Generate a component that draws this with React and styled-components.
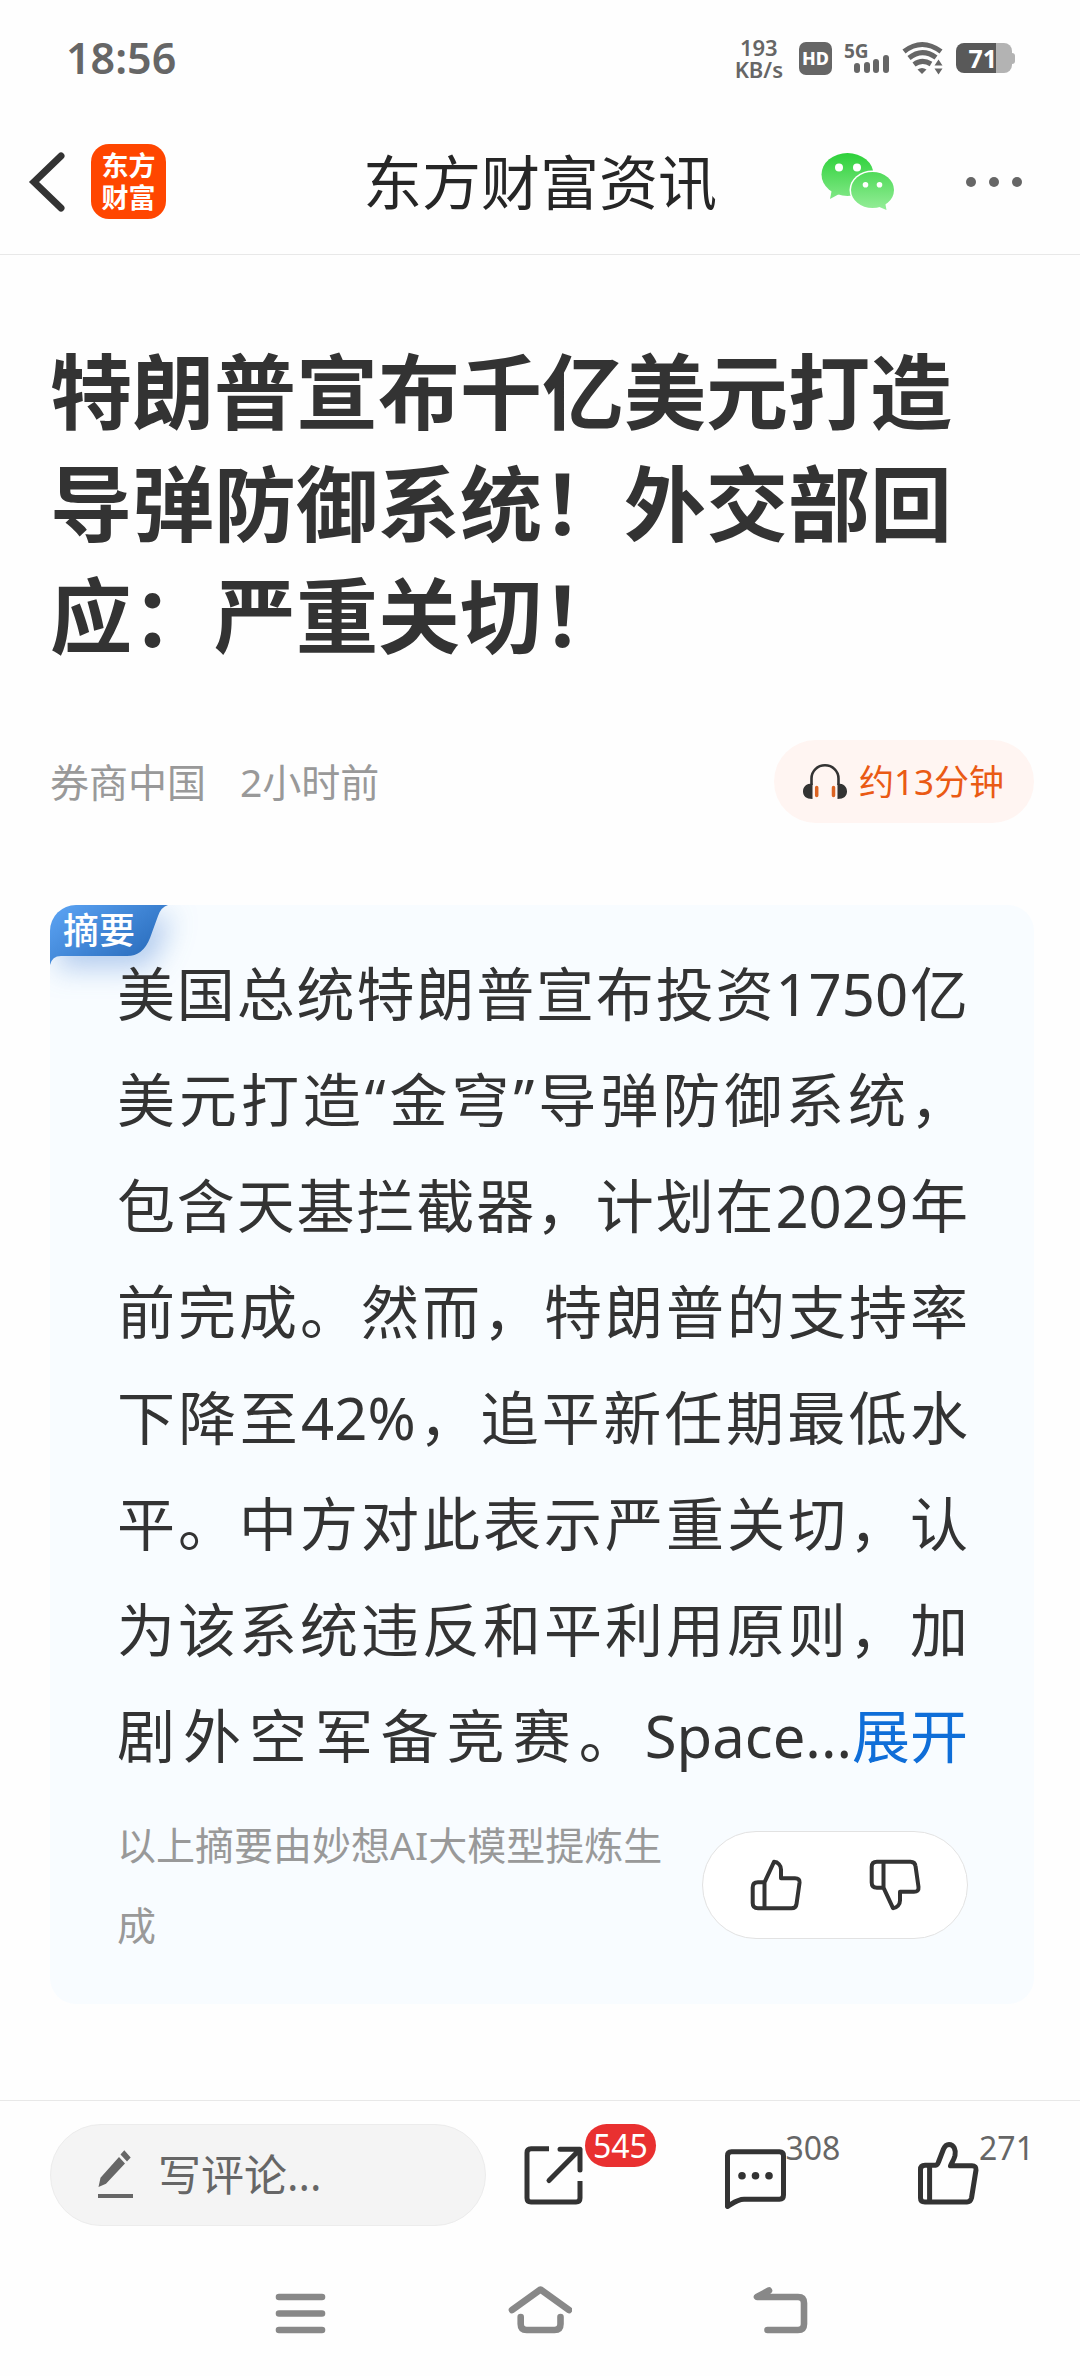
import React from "react";
import styled, { createGlobalStyle } from "styled-components";

const GlobalStyle = createGlobalStyle`
  *, *::before, *::after { box-sizing: border-box; }
  body {
    margin: 0;
    background: #fefefe;
    color: #333;
    font-family: "Noto Sans", "Noto Sans CJK SC", sans-serif;
  }
  button {
    margin: 0;
    padding: 0;
    border: 0;
    background: none;
    color: inherit;
    font: inherit;
    cursor: pointer;
  }
  svg { display: block; flex: none; }
`;

const Page = styled.div`
  display: flex;
  flex-direction: column;
  min-height: 100vh;
`;

/* Status bar */
const StatusBar = styled.div`
  display: flex;
  align-items: center;
  justify-content: space-between;
  height: 109px;
  padding: 7px 65px 0 66px;
  color: #666;
`;

const Clock = styled.time`
  font-size: 43px;
  line-height: 48px;
  font-weight: 600;
`;

const StatusIcons = styled.div`
  display: flex;
  align-items: center;
  gap: 12px;
`;

const NetSpeed = styled.div`
  display: flex;
  flex-direction: column;
  align-items: center;
  margin-right: 4px;
  font-size: 22px;
  line-height: 22px;
  font-weight: 600;
`;

const HdBadge = styled.span`
  display: grid;
  place-items: center;
  width: 33px;
  height: 33px;
  border-radius: 7px;
  background: #666;
  color: #fff;
  font-size: 18px;
  line-height: 20px;
  font-weight: 800;
`;

const Signal = styled.div`
  display: flex;
  flex-direction: column;
  width: 46px;
  height: 34px;
  font-size: 19px;
  line-height: 20px;
  font-weight: 700;
`;

const SignalBars = styled.svg`
  align-self: flex-end;
  margin-top: -6px;
`;

const Battery = styled.div`
  display: flex;
  align-items: center;
`;

const BatteryBody = styled.div`
  display: flex;
  justify-content: flex-end;
  width: 56px;
  height: 30px;
  padding-right: 15px;
  border-radius: 8px;
  background: linear-gradient(90deg, #595959 71%, #b3b3b3 71%);
  color: #fff;
  font-size: 25px;
  line-height: 30px;
  font-weight: 700;
`;

const BatteryTip = styled.span`
  width: 3px;
  height: 11px;
  border-radius: 0 3px 3px 0;
  background: #b3b3b3;
`;

/* App header */
const Header = styled.header`
  display: grid;
  grid-template-columns: 1fr auto 1fr;
  align-items: center;
  height: 146px;
  border-bottom: 1px solid #e8e8e8;
`;

const HeaderLeft = styled.div`
  display: flex;
  align-items: center;
  gap: 23px;
  padding-left: 28px;
`;

const HeaderRight = styled.div`
  display: flex;
  align-items: center;
  justify-content: flex-end;
  gap: 70px;
  padding-right: 57px;
`;

const AppLogo = styled.a`
  display: flex;
  flex-direction: column;
  align-items: center;
  justify-content: center;
  width: 75px;
  height: 75px;
  border-radius: 18px;
  background: #ff4600;
  color: #fff;
  font-size: 27px;
  line-height: 32px;
  font-weight: 700;
  text-decoration: none;
`;

const HeaderTitle = styled.h2`
  margin: 0;
  color: #262626;
  font-size: 59px;
  line-height: 84px;
  font-weight: 400;
`;

/* Article */
const Article = styled.article`
  flex: 1;
  padding: 80px 46px 96px 50px;
`;

const Headline = styled.h1`
  margin: 0;
  padding-right: 40px;
  font-size: 82px;
  line-height: 112px;
  font-weight: 700;
`;

const MetaRow = styled.div`
  display: flex;
  align-items: center;
  justify-content: space-between;
  margin-top: 69px;
`;

const Meta = styled.div`
  display: flex;
  gap: 34px;
  color: #999;
  font-size: 39px;
  line-height: 56px;
`;

const ListenButton = styled.button`
  display: flex;
  align-items: center;
  gap: 11px;
  height: 83px;
  padding: 0 30px 0 28px;
  border-radius: 42px;
  background: #fff5f2;
  color: #ea5a14;
  font-size: 35px;
  line-height: 52px;
`;

const SummaryCard = styled.section`
  position: relative;
  margin-top: 82px;
  padding: 36px 66px 39px 67px;
  border-radius: 26px;
  background: #f8fcff;
  overflow: hidden;
`;

const Tag = styled.div`
  position: absolute;
  top: 0;
  left: 0;
`;

const TagShape = styled.svg`
  filter: drop-shadow(9px 12px 14px rgba(50, 115, 205, 0.35));
  overflow: visible;
`;

const TagText = styled.span`
  position: absolute;
  top: 0;
  left: 13px;
  color: #fff;
  font-size: 36px;
  line-height: 52px;
  font-weight: 500;
`;

const SummaryText = styled.p`
  position: relative;
  margin: 0;
  font-size: 58px;
  line-height: 106px;
  text-align: justify;
  text-align-last: justify;
`;

const ExpandButton = styled.button`
  display: inline-block;
  color: #0f6ed8;
  text-align-last: auto;
`;

const CardFooter = styled.div`
  display: flex;
  align-items: center;
  gap: 16px;
  margin-top: 16px;
`;

const Disclaimer = styled.p`
  flex: 1;
  margin: 0;
  color: #999;
  font-size: 39px;
  line-height: 80px;
`;

const VotePill = styled.div`
  display: flex;
  align-items: center;
  justify-content: center;
  gap: 67px;
  width: 266px;
  height: 108px;
  border: 1px solid #e2e2e2;
  border-radius: 54px;
  background: #fff;
`;

/* Comment bar */
const CommentBar = styled.footer`
  display: flex;
  gap: 37px;
  padding: 23px 46px 0 50px;
  border-top: 1px solid #e8e8e8;
`;

const CommentBox = styled.label`
  display: flex;
  align-items: center;
  gap: 23px;
  flex: 0 1 436px;
  min-width: 0;
  height: 102px;
  padding: 0 46px;
  border: 1px solid #ececec;
  border-radius: 51px;
  background: #f4f4f4;
`;

const CommentInput = styled.input`
  flex: 1;
  min-width: 0;
  padding: 0;
  border: 0;
  outline: 0;
  background: none;
  color: #333;
  font: inherit;
  font-size: 43px;
  line-height: 60px;
  &::placeholder { color: #666; opacity: 1; }
`;

const Actions = styled.div`
  display: grid;
  grid-template-columns: 201fr 194fr 116fr;
  flex: 1;
`;

const ActionButton = styled.button`
  display: flex;
  align-items: flex-start;
  justify-self: start;
  svg { margin-top: 18px; }
`;

const Count = styled.span`
  color: ${(p) => (p.$alert ? "#fff" : "#666")};
  background: ${(p) => (p.$alert ? "#e93030" : "none")};
  padding: ${(p) => (p.$alert ? "0 8px" : "0")};
  border-radius: 22px;
  font-size: 32px;
  line-height: ${(p) => (p.$alert ? "43px" : "47px")};
`;

/* System navigation */
const SystemNav = styled.nav`
  display: grid;
  grid-template-columns: repeat(3, 1fr);
  justify-items: center;
  align-items: center;
  width: 100%;
  max-width: 720px;
  margin: 0 auto;
  padding: 56px 0 34px;
`;

const line = {
  fill: "none",
  strokeLinecap: "round",
  strokeLinejoin: "round",
};

const WifiIcon = () => (
  <svg width="42" height="34" viewBox="0 0 42 34" fill="none" stroke="#666" strokeWidth="5">
    <path d="M2 10.5Q20 -3.500 39 10.500" />
    <path d="M7 17Q20 6.500 34 16.500" />
    <path d="M12 23.500Q20 17.500 29 23" />
    <path d="M15.500 28.500Q20 25.500 24.500 28.500L20 33Z" fill="#666" stroke="none" />
    <path d="M36.500 18.500L40.500 24.500H32.500ZM36.500 33.500L40.500 27.500H32.500Z" fill="#666" stroke="none" />
  </svg>
);

const BackIcon = () => (
  <svg width="40" height="64" viewBox="0 0 40 64" {...line} strokeLinejoin="miter" stroke="#333" strokeWidth="7">
    <path d="M33 6L6 32L33 58" />
  </svg>
);

const WeChatIcon = () => (
  <svg width="74" height="60" viewBox="0 0 74 60">
    <defs>
      <linearGradient id="wechat" x1="0" y1="0" x2="0" y2="58" gradientUnits="userSpaceOnUse">
        <stop offset="0" stopColor="#2bd038" />
        <stop offset="1" stopColor="#95ed98" />
      </linearGradient>
    </defs>
    <ellipse cx="26.500" cy="22.500" rx="26" ry="21.500" fill="url(#wechat)" />
    <path d="M11 37L9 47L20 41Z" fill="url(#wechat)" />
    <ellipse cx="51.500" cy="38" rx="23" ry="19.500" fill="#fff" />
    <ellipse cx="51.500" cy="38" rx="21.500" ry="18" fill="url(#wechat)" />
    <path d="M56 54L65.500 58L64 50Z" fill="url(#wechat)" />
    <g fill="#fff">
      <circle cx="18" cy="15.500" r="4" />
      <circle cx="36" cy="15.500" r="4" />
      <circle cx="44.500" cy="32.700" r="2.800" />
      <circle cx="58.500" cy="32.700" r="2.800" />
    </g>
  </svg>
);

const MoreIcon = () => (
  <svg width="58" height="12" viewBox="0 0 58 12" fill="#666">
    <circle cx="6" cy="6" r="5" />
    <circle cx="29" cy="6" r="5" />
    <circle cx="52" cy="6" r="5" />
  </svg>
);

const HeadphoneIcon = () => (
  <svg width="46" height="38" viewBox="0 0 46 38">
    <path d="M9.500 22V15.500C9.500 8 15.500 2.300 23 2.300S36.500 8 36.500 15.500V22" fill="none" stroke="#333" strokeWidth="2.600" />
    <path d="M10.500 20.500C4 20.500 1 24 1 28.500S4 36 10.500 36ZM35.500 20.500C42 20.500 45 24 45 28.500S42 36 35.500 36Z" fill="#333" />
    <path d="M14.700 24.500V32.500M31.500 24.500V32.500" stroke="#dc6423" strokeWidth="3.500" strokeLinecap="round" />
  </svg>
);

const TagBackground = () => (
  <TagShape width="118" height="60" viewBox="0 0 118 60">
    <defs>
      <linearGradient id="tag" x1="0" y1="0" x2="1" y2="0.700">
        <stop offset="0" stopColor="#5da5f5" />
        <stop offset="1" stopColor="#286bbb" />
      </linearGradient>
    </defs>
    <path d="M0 0H118Q111 2 108 11L100 33Q93 51 77 51H11Q2 51 0 60Z" fill="url(#tag)" />
  </TagShape>
);

const VoteIcon = ({ down }) => (
  <svg width="52" height="52" viewBox="0 0 52 52" {...line} stroke="#333" strokeWidth="4">
    <g transform={down ? "matrix(1 0 0 -1 0 52)" : undefined}>
      <path d="M14.500 23.300L24 2.800C28 3 31 6.500 31 10.500V19.300H45Q50 19.300 49.500 24L46.500 45Q46 49.300 41.500 49.300H8Q2.700 49.300 2.700 44V28.500Q2.700 23.300 8 23.300ZM14.500 23.300V49.300" />
    </g>
  </svg>
);

const PencilIcon = () => (
  <svg width="38" height="52" viewBox="0 0 38 52" fill="#666">
    <path d="M1.500 38L3.500 28.700L22 8L28 14.500L9 34.700ZM23.500 5.500L27.300 1.300L33.700 8.500L30 12.500Z" />
    <path d="M1 45H36V49H1Z" />
  </svg>
);

const ShareIcon = () => (
  <svg width="62" height="66" viewBox="0 0 62 66" {...line} stroke="#333" strokeWidth="5">
    <path strokeLinecap="butt" d="M26 6.700H8Q4 6.700 4 10.700V56Q4 60 8 60H53Q57 60 57 56V39" />
    <path d="M37 7.300H57V28M57 7.300L26 38.500" />
  </svg>
);

const ChatIcon = () => (
  <svg width="62" height="68" viewBox="0 0 62 68" {...line} stroke="#333" strokeWidth="5">
    <path d="M3.500 64.500V13.700Q3.500 9.700 7.500 9.700H55.500Q59.500 9.700 59.500 13.700V53Q59.500 57.300 55.500 57.300H20C13 57.300 8 62 3.500 64.500Z" />
    <g fill="#333" stroke="none">
      <circle cx="18" cy="33.700" r="3.800" />
      <circle cx="31.500" cy="33.700" r="3.800" />
      <circle cx="45" cy="33.700" r="3.800" />
    </g>
  </svg>
);

const LikeIcon = () => (
  <svg width="62" height="66" viewBox="0 0 62 66" {...line} stroke="#333" strokeWidth="5">
    <path d="M12.600 23.300H18.500Q20.500 23 21.500 20L26.500 7C28 3.500 30 2.500 32 2.500C37 2.500 39 8 38 13.500C37 18 35 20 33.500 23.800H55Q59.500 23.800 59 28L54.500 56Q53.500 60 50 60H8Q3.500 60 3.500 56V27.500Q3.500 23.300 8 23.300ZM12.600 23.300V60" />
  </svg>
);

const NavIcon = ({ d }) => (
  <svg width="64" height="60" viewBox="0 0 64 60" {...line} stroke="#888" strokeWidth="6.600">
    <path d={d} />
  </svg>
);

export default function App() {
  return (
    <Page lang="zh-CN">
      <GlobalStyle />
      <StatusBar>
        <Clock>18:56</Clock>
        <StatusIcons>
          <NetSpeed>
            <span>193</span>
            <span>KB/s</span>
          </NetSpeed>
          <HdBadge>HD</HdBadge>
          <Signal>
            <span>5G</span>
            <SignalBars width="36" height="18" viewBox="0 0 36 18" fill="#666">
              <rect x="0" y="8" width="6" height="10" rx="3" />
              <rect x="10" y="7" width="6" height="11" rx="3" />
              <rect x="19" y="4" width="6" height="14" rx="3" />
              <rect x="29" y="0" width="6" height="18" rx="3" />
            </SignalBars>
          </Signal>
          <WifiIcon />
          <Battery>
            <BatteryBody>71</BatteryBody>
            <BatteryTip />
          </Battery>
        </StatusIcons>
      </StatusBar>

      <Header>
        <HeaderLeft>
          <button type="button" aria-label="返回"><BackIcon /></button>
          <AppLogo href="#home">
            <span>东方</span>
            <span>财富</span>
          </AppLogo>
        </HeaderLeft>
        <HeaderTitle>东方财富资讯</HeaderTitle>
        <HeaderRight>
          <button type="button" aria-label="微信分享"><WeChatIcon /></button>
          <button type="button" aria-label="更多"><MoreIcon /></button>
        </HeaderRight>
      </Header>

      <Article>
        <Headline>特朗普宣布千亿美元打造导弹防御系统！外交部回应：严重关切！</Headline>
        <MetaRow>
          <Meta>
            <span>券商中国</span>
            <span>2小时前</span>
          </Meta>
          <ListenButton type="button">
            <HeadphoneIcon />
            约13分钟
          </ListenButton>
        </MetaRow>

        <SummaryCard>
          <Tag>
            <TagBackground />
            <TagText>摘要</TagText>
          </Tag>
          <SummaryText>
            美国总统特朗普宣布投资1750亿美元打造“金穹”导弹防御系统，包含天基拦截器，计划在2029年前完成。然而，特朗普的支持率下降至42%，追平新任期最低水平。中方对此表示严重关切，认为该系统违反和平利用原则，加剧外空军备竞赛。Space...<ExpandButton type="button">展开</ExpandButton>
          </SummaryText>
          <CardFooter>
            <Disclaimer>以上摘要由妙想AI大模型提炼生成</Disclaimer>
            <VotePill>
              <button type="button" aria-label="赞同"><VoteIcon /></button>
              <button type="button" aria-label="不赞同"><VoteIcon down /></button>
            </VotePill>
          </CardFooter>
        </SummaryCard>
      </Article>

      <CommentBar>
        <CommentBox>
          <PencilIcon />
          <CommentInput type="text" placeholder="写评论..." aria-label="写评论" />
        </CommentBox>
        <Actions>
          <ActionButton type="button" aria-label="分享">
            <ShareIcon />
            <Count $alert>545</Count>
          </ActionButton>
          <ActionButton type="button" aria-label="评论">
            <ChatIcon />
            <Count>308</Count>
          </ActionButton>
          <ActionButton type="button" aria-label="点赞">
            <LikeIcon />
            <Count>271</Count>
          </ActionButton>
        </Actions>
      </CommentBar>

      <SystemNav>
        <button type="button" aria-label="最近任务"><NavIcon d="M11 15H54M11 31.500H54M11 48H54" /></button>
        <button type="button" aria-label="主屏幕"><NavIcon d="M4 28L32.500 7.500L61 28M12.700 35V42Q12.700 48 18.700 48H46.500Q52.500 48 52.500 42V35" /></button>
        <button type="button" aria-label="后退"><NavIcon d="M21 8.500L9 15H50Q56 15 56 21V42Q56 48 50 48H19.500" /></button>
      </SystemNav>
    </Page>
  );
}
